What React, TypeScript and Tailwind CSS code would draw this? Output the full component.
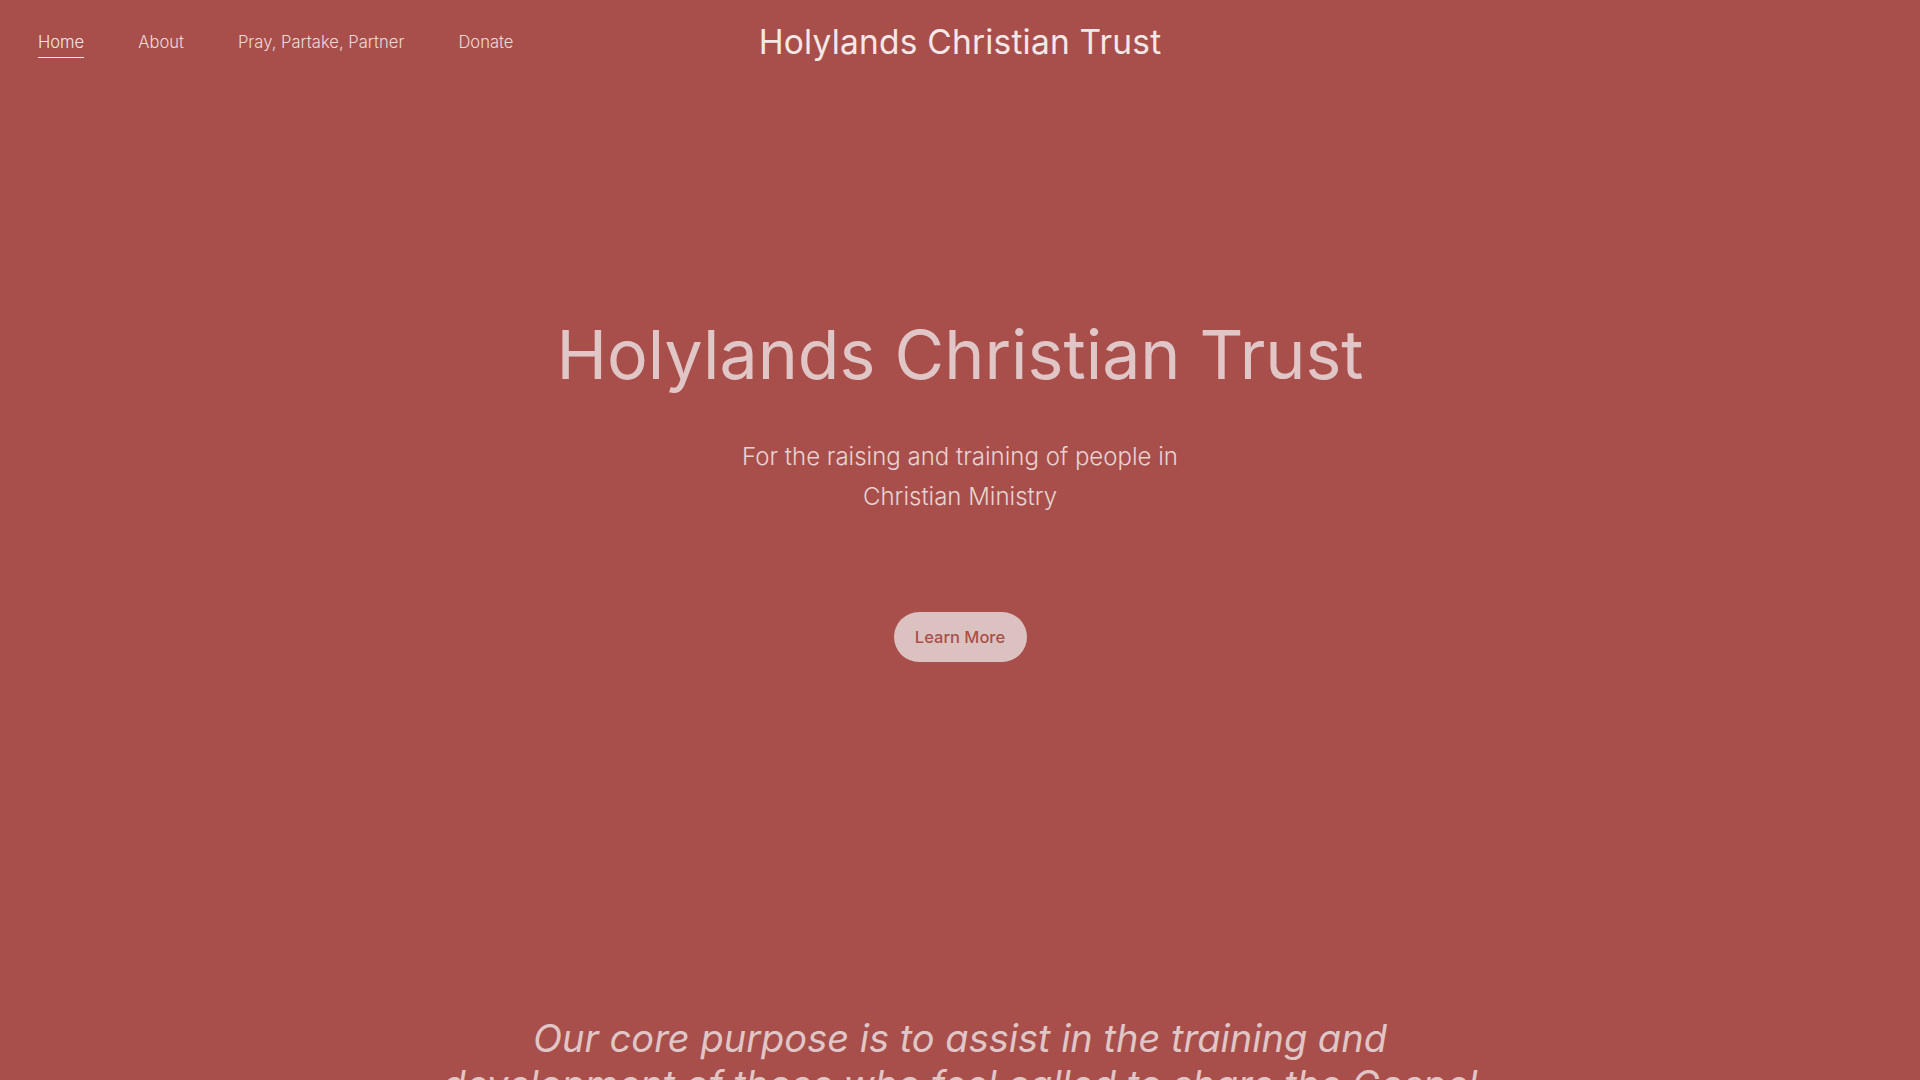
import React from 'react'

export default function App() {
  const links = ['Home', 'About', 'Pray, Partake, Partner', 'Donate']

  return (
    <div className="min-h-screen w-full overflow-hidden bg-[#a84f4b] font-['Inter','Noto_Sans',sans-serif]">
      <header className="relative flex h-[84px] items-center px-[38px]">
        <nav className="flex items-center gap-[54px]">
          {links.map((l, i) => (
            <a
              key={l}
              href="#"
              className={
                i === 0
                  ? 'border-b border-[#f3e6e6] pb-[3px] pt-[4px] text-[16.6px] font-light text-[#f3e6e6]'
                  : 'pb-[3px] pt-[4px] text-[16.6px] font-light text-[#ecd9d9]'
              }
            >
              {l}
            </a>
          ))}
        </nav>
        <div className="absolute left-1/2 top-1/2 -translate-x-1/2 -translate-y-1/2 whitespace-nowrap text-[33.5px] font-normal tracking-[0.2px] text-[#f3e7e7]">
          Holylands Christian Trust
        </div>
      </header>

      <main className="flex flex-col items-center text-center">
        <h1 className="mt-[228px] text-[68px] font-normal leading-[84px] text-[#e0c6c6]">
          Holylands Christian Trust
        </h1>
        <p className="mt-[41px] max-w-[490px] text-[24px] font-light leading-[40px] text-[#e8d2d2]">
          For the raising and training of people in Christian Ministry
        </p>
        <button className="mt-[95px] h-[50px] w-[133px] rounded-full bg-[#dcc1c1] text-[16.5px] font-medium text-[#a84f4b]">
          Learn More
        </button>
        <p className="mt-[353px] max-w-[1050px] text-[38px] font-normal italic leading-[46px] text-[#e0c6c6]">
          Our core purpose is to assist in the training and development of those who feel called to share the Gospel
        </p>
      </main>
    </div>
  )
}
